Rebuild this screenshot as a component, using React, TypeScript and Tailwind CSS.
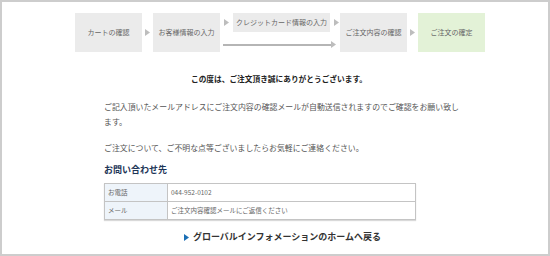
import React from 'react';

const Arrow: React.FC<{ className?: string }> = ({ className = '' }) => (
  <svg width="5" height="7" viewBox="0 0 5 7" className={className}>
    <path d="M0 0 L5 3.5 L0 7 Z" fill="#bdbdbd" />
  </svg>
);

const Step: React.FC<{ label: string; active?: boolean }> = ({ label, active }) => (
  <div
    className={`w-[67px] h-[39px] flex items-center justify-center text-[7px] text-[#666] ${
      active ? 'bg-[#e3f2d7]' : 'bg-[#ebebeb]'
    }`}
  >
    {label}
  </div>
);

export default function App() {
  return (
    <div
      className="w-[550px] h-[256px] border-2 border-[#cdcdcd] bg-white overflow-hidden"
      style={{ fontFamily: '"Noto Sans CJK JP", "Noto Sans", sans-serif' }}
    >
      {/* Steps */}
      <div className="flex items-start pl-[73px] pt-[11px]">
        <Step label="カートの確認" />
        <div className="w-[11px] h-[39px] flex items-center justify-center">
          <Arrow />
        </div>
        <Step label="お客様情報の入力" />
        <div className="w-[120px] h-[39px] flex flex-col">
          <div className="flex items-center h-[19px]">
            <Arrow className="ml-[4px]" />
            <div className="ml-[4px] w-[97px] h-[19px] bg-[#ebebeb] text-[7px] text-[#666] flex items-center justify-center">
              クレジットカード情報の入力
            </div>
            <Arrow className="ml-[4px]" />
          </div>
          <div className="flex items-center mt-[9px] ml-[3px]">
            <div className="w-[108px] h-[2px] bg-[#b5b5b5]" />
            <Arrow />
          </div>
        </div>
        <Step label="ご注文内容の確認" />
        <div className="w-[11px] h-[39px] flex items-center justify-center">
          <Arrow />
        </div>
        <Step label="ご注文の確定" active />
      </div>

      {/* Title */}
      <p className="mt-[22px] pl-[8px] text-center text-[7.7px] font-bold text-[#222] leading-[10px]">
        この度は、ご注文頂き誠にありがとうございます。
      </p>

      <div className="pl-[102px] mt-[15px]">
        <p className="w-[358px] text-[7.9px] text-[#555] leading-[15px]">
          ご記入頂いたメールアドレスにご注文内容の確認メールが自動送信されますのでご確認をお願い致します。
        </p>
        <p className="mt-[11px] text-[7.9px] text-[#555] leading-[15px]">
          ご注文について、ご不明な点等ございましたらお気軽にご連絡ください。
        </p>
        <h2 className="mt-[9px] text-[9px] font-bold text-[#1d3557] leading-[12px]">お問い合わせ先</h2>

        <table className="mt-[7px] w-[312px] border border-[#c4c4c4] border-collapse text-[6.5px] text-[#666] shadow-[0_1px_1px_rgba(0,0,0,0.15)]">
          <tbody>
            <tr className="h-[18px]">
              <td className="w-[63px] pl-[3px] bg-[#eef4fa] border border-[#c4c4c4]">お電話</td>
              <td className="pl-[3px] border border-[#c4c4c4]">044-952-0102</td>
            </tr>
            <tr className="h-[18px]">
              <td className="pl-[3px] bg-[#eef4fa] border border-[#c4c4c4]">メール</td>
              <td className="pl-[3px] border border-[#c4c4c4]">ご注文内容確認メールにご返信ください</td>
            </tr>
          </tbody>
        </table>
      </div>

      {/* Link */}
      <div className="mt-[11px] pl-[15px] flex items-center justify-center gap-[4px]">
        <svg width="5" height="7" viewBox="0 0 5 7">
          <path d="M0 0 L5 3.5 L0 7 Z" fill="#1b6fb5" />
        </svg>
        <span className="text-[9px] font-bold text-[#333] leading-[12px]">
          グローバルインフォメーションのホームへ戻る
        </span>
      </div>
    </div>
  );
}
